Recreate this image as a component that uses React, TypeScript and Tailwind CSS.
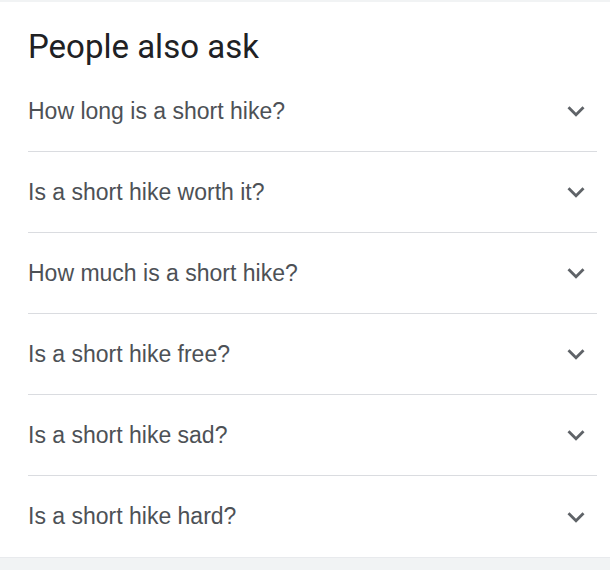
const questions = [
  "How long is a short hike?",
  "Is a short hike worth it?",
  "How much is a short hike?",
  "Is a short hike free?",
  "Is a short hike sad?",
  "Is a short hike hard?",
];

function Chevron() {
  return (
    <svg viewBox="0 0 24 24" className="w-[34px] h-[34px] fill-[#5f6368] shrink-0">
      <path d="M16.59 8.59L12 13.17 7.41 8.59 6 10l6 6 6-6z" />
    </svg>
  );
}

export default function App() {
  return (
    <main className="w-[610px] h-[574px] bg-white overflow-hidden flex flex-col">
      <div className="h-[2px] bg-[#f1f3f4]" />
      <div className="pl-[28px] pr-[13px] flex-1">
        <h2 className="pt-[27px] pb-[6px] text-[33px] leading-[36px] text-[#202124] font-['Roboto',sans-serif]">
          People also ask
        </h2>
        {questions.map((q, i) => (
          <div
            key={q}
            className={
              "h-[81px] flex items-center justify-between pr-[4px] " +
              (i < questions.length - 1 ? "border-b border-[#dadce0]" : "")
            }
          >
            <span className="text-[23px] text-[#4d5156] font-['Liberation_Sans',Arial,sans-serif]">{q}</span>
            <Chevron />
          </div>
        ))}
      </div>
      <div className="h-[13px] bg-[#f1f3f4] border-t border-[#e8eaed] mb-[4px]" />
    </main>
  );
}
